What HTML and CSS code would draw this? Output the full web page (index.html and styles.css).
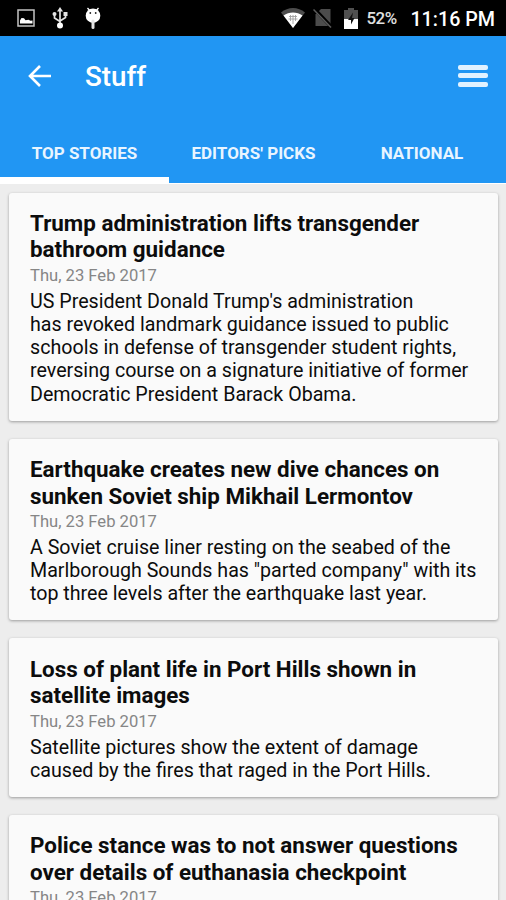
FILE: index.html
```html
<!DOCTYPE html>
<html lang="en">
<head>
    <meta charset="UTF-8">
    <meta name="viewport" content="width=device-width, initial-scale=1.0">
    <title>Stuff</title>
    <link rel="stylesheet" href="styles.css">
</head>
<body>
    <div class="status-bar">
        <svg class="status-picture" width="18" height="18" viewBox="0 0 18 18">
            <rect x="1" y="1" width="16" height="16" fill="none" stroke="#c4c4c4" stroke-width="1.5"/>
            <path d="M3 14.5v-3l1.500-2.500 2.500.3 1.500 2 3-.5 2 1 2-.2v2.900z" fill="#fff"/>
        </svg>
        <svg class="status-usb" width="16" height="22" viewBox="0 0 16 22">
            <path d="M8 3v15M2.500 7.500v3.500L8 14.500M13.500 7v3.500L8 14" fill="none" stroke="#e4e4e4" stroke-width="1.700"/>
            <path d="M8 0l3 4.500H5z" fill="#e4e4e4"/>
            <circle cx="2.500" cy="7" r="2" fill="#e4e4e4"/>
            <rect x="11.500" y="5" width="4" height="4" fill="#e4e4e4"/>
            <circle cx="8" cy="18.500" r="3" fill="#fff"/>
        </svg>
        <svg class="status-debug" width="16" height="22" viewBox="0 0 16 22">
            <path d="M2.500 1l3 3.500M13.500 1l-3 3.500" stroke="#fff" stroke-width="1.300"/>
            <circle cx="8" cy="8.700" r="7.300" fill="#fff"/>
            <path d="M8 14v6.500" stroke="#e4e4e4" stroke-width="3" stroke-linecap="round"/>
            <circle cx="5.300" cy="6" r=".9" fill="#222"/>
            <circle cx="10.700" cy="6" r=".9" fill="#222"/>
        </svg>
        <div class="status-right">
            <svg class="status-wifi" width="24" height="20" viewBox="0 0 24 20">
                <path d="M0 4.500C7-1.500 17-1.500 24 4.500L12 20z" fill="#4c4c4c"/>
                <path d="M2.500 7.500C8 3.500 16 3.500 21.500 7.500L12 20z" fill="#fff"/>
                <path d="M8 8.500h8M7.500 11h9M9.500 7v6M12 7v9M14.500 7v6" stroke="#a0a0a0" stroke-width=".9"/>
            </svg>
            <svg class="status-sim" width="20" height="21" viewBox="0 0 20 21">
                <path d="M8 1h9.500v17H2.500V6.500z" fill="#4c4c4c"/>
                <path d="M2 1.500l17 18" stroke="#000" stroke-width="3.500"/>
                <path d="M.5 1.500l17.500 18" stroke="#5c5c5c" stroke-width="1.500"/>
            </svg>
            <svg class="status-battery" width="14" height="21" viewBox="0 0 14 21">
                <path d="M4 0h6v2h4v9H0V2h4z" fill="#505050"/>
                <path d="M0 11h14v10H0z" fill="#fff"/>
                <path d="M9 4.500L4 12h3v4.500L10.500 10H8z" fill="#111"/>
            </svg>
            <span class="status-percent">52%</span>
            <span class="status-time">11:16 PM</span>
        </div>
    </div>

    <header class="app-header">
        <div class="toolbar">
            <svg class="back-icon" width="24" height="22" viewBox="0 0 24 22">
                <path d="M12 1L2 11l10 10M2 11h21" fill="none" stroke="#fff" stroke-width="2.600"/>
            </svg>
            <h1>Stuff</h1>
            <div class="menu-icon"><i></i><i></i><i></i></div>
        </div>
        <nav class="tabs">
            <a class="tab active"><span>TOP STORIES</span></a>
            <a class="tab"><span>EDITORS' PICKS</span></a>
            <a class="tab"><span>NATIONAL</span></a>
        </nav>
    </header>

    <main class="stories">
        <article class="card">
            <h2>Trump administration lifts transgender<br>bathroom guidance</h2>
            <div class="date">Thu, 23 Feb 2017</div>
            <p>US President Donald Trump's administration<br>has revoked landmark guidance issued to public<br>schools in defense of transgender student rights,<br>reversing course on a signature initiative of former<br>Democratic President Barack Obama.</p>
        </article>
        <article class="card">
            <h2>Earthquake creates new dive chances on<br>sunken Soviet ship Mikhail Lermontov</h2>
            <div class="date">Thu, 23 Feb 2017</div>
            <p>A Soviet cruise liner resting on the seabed of the<br>Marlborough Sounds has "parted company" with its<br>top three levels after the earthquake last year.</p>
        </article>
        <article class="card">
            <h2>Loss of plant life in Port Hills shown in<br>satellite images</h2>
            <div class="date">Thu, 23 Feb 2017</div>
            <p>Satellite pictures show the extent of damage<br>caused by the fires that raged in the Port Hills.</p>
        </article>
        <article class="card">
            <h2>Police stance was to not answer questions<br>over details of euthanasia checkpoint</h2>
            <div class="date">Thu, 23 Feb 2017</div>
        </article>
    </main>
</body>
</html>
```
FILE: styles.css
```css
* {
    box-sizing: border-box;
}
body {
    margin: 0;
    height: 900px;
    overflow: hidden;
    display: flex;
    flex-direction: column;
    font-family: Roboto, sans-serif;
    background: #ededed;
    color: #0c0c0c;
}
h1, h2, p {
    margin: 0;
}
svg {
    display: block;
    flex: none;
}

/* Status bar */
.status-bar {
    flex: none;
    height: 36px;
    display: flex;
    align-items: center;
    padding: 0 11px 0 17px;
    background: #000;
    color: #fff;
}
.status-usb {
    margin-left: 17px;
}
.status-debug {
    margin-left: 17px;
}
.status-right {
    display: flex;
    align-items: center;
    margin-left: auto;
}
.status-sim {
    margin-left: 8px;
}
.status-battery {
    margin-left: 11px;
}
.status-percent {
    width: 31px;
    margin-left: 8px;
    font-size: 16.9px;
    font-weight: 500;
    letter-spacing: -0.4px;
    color: #e0e0e0;
}
.status-time {
    margin-left: 13px;
    font-size: 19.7px;
    font-weight: 500;
    line-height: 36px;
    padding-top: 3px;
}

/* Header */
.app-header {
    flex: none;
    height: 147px;
    background: #2196f3;
    color: #fff;
}
.toolbar {
    height: 79px;
    display: flex;
    align-items: center;
    padding: 0 18px 0 28px;
}
h1 {
    margin-left: 33px;
    padding-top: 1px;
    font-size: 27.8px;
    font-weight: 500;
}
.menu-icon {
    display: flex;
    flex-direction: column;
    gap: 3.5px;
    width: 30px;
    margin-left: auto;
}
.menu-icon i {
    height: 5px;
    border-radius: 2px;
    background: #e1f2ff;
}
.tabs {
    height: 68px;
    display: grid;
    grid-template-columns: 169px 169px 168px;
}
.tab {
    display: flex;
    align-items: center;
    justify-content: center;
    padding-top: 13px;
    font-size: 17px;
    font-weight: 700;
    white-space: nowrap;
    color: #e9f5ff;
    border-bottom: 6px solid transparent;
}
.tab.active {
    border-bottom-color: #fff;
}

/* Stories */
.stories {
    flex: 1;
    min-height: 0;
    padding: 8.5px 8px 0 9px;
    border-top: 1px solid #fff;
    overflow: hidden;
}
.card {
    margin-bottom: 18px;
    padding: 17.1px 0 14.8px 21px;
    border-radius: 3px;
    background: #fafafa;
    box-shadow: 0 1px 3px rgba(0, 0, 0, 0.35);
    white-space: nowrap;
}
.card h2 {
    font-size: 22.4px;
    font-weight: 700;
    line-height: 26.7px;
}
.card .date {
    padding-bottom: 0.7px;
    font-size: 16.6px;
    line-height: 26px;
    color: #868686;
}
.card p {
    font-size: 19.65px;
    line-height: 23.25px;
}
```
